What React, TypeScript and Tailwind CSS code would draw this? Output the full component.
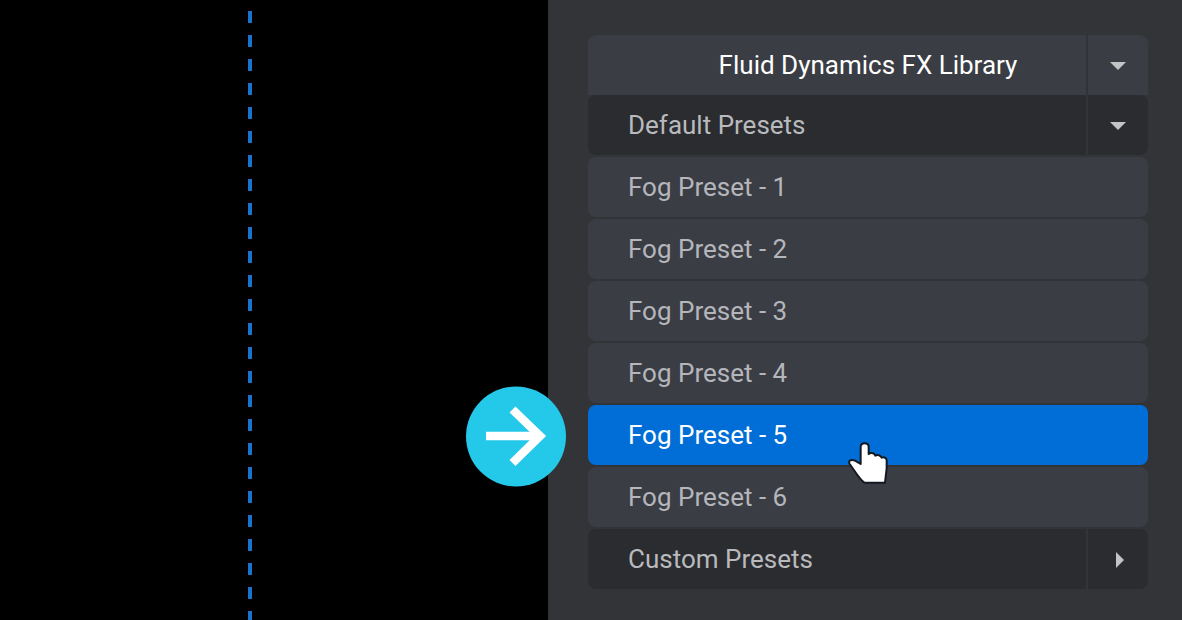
import React from 'react';

interface GroupRowProps {
    label: string;
    open: boolean;
    variant?: 'library' | 'group';
}

interface PresetRowProps {
    label: string;
    selected?: boolean;
    children?: React.ReactNode;
}

const presets = [1, 2, 3, 4, 5, 6];
const selectedPreset = 5;

const Caret: React.FC<{ open: boolean }> = ({ open }) => (
    open ? (
        <svg className="w-4 h-2" viewBox="0 0 16 8" fill="#c3c4c6" aria-hidden="true">
            <path d="M0 0H16L8 8Z" />
        </svg>
    ) : (
        <svg className="w-2 h-4 ml-1" viewBox="0 0 8 16" fill="#c3c4c6" aria-hidden="true">
            <path d="M0 0L8 8L0 16Z" />
        </svg>
    )
);

const GroupRow: React.FC<GroupRowProps> = ({ label, open, variant = 'group' }) => {
    const isLibrary = variant === 'library';
    const tone = isLibrary ? 'bg-[#3b3d44] text-white' : 'bg-[#2b2c2f] text-[#b9babd]';

    return (
        <div className={`flex gap-0.5 h-[60px] ${isLibrary ? 'rounded-t-lg bg-[#323337]' : 'rounded-lg bg-[#333438]'}`}>
            <button type="button" className={`flex-1 ${tone} ${isLibrary ? 'rounded-tl-lg pl-[62px] text-center' : 'rounded-l-lg pl-10 text-left'}`}>
                {label}
            </button>
            <button
                type="button"
                aria-label={`Toggle ${label}`}
                aria-expanded={open}
                className={`flex items-center justify-center w-[60px] pt-0.5 ${tone} ${isLibrary ? 'rounded-tr-lg' : 'rounded-r-lg'}`}
            >
                <Caret open={open} />
            </button>
        </div>
    );
};

const PresetRow: React.FC<PresetRowProps> = ({ label, selected = false, children }) => (
    <li className="relative">
        <button
            type="button"
            aria-pressed={selected}
            className={`block w-full h-[60px] pl-10 rounded-lg text-left ${selected ? 'bg-[#006ed6] text-white' : 'bg-[#3b3d44] text-[#b4b6bb]'}`}
        >
            {label}
        </button>
        {children}
    </li>
);

const ArrowBadge: React.FC = () => (
    <svg className="absolute z-10 -left-[122px] -top-[18px] size-[100px] overflow-visible" viewBox="0 0 100 100" fill="none" aria-hidden="true">
        <circle cx="50" cy="49.5" r="50" fill="#24c8e8" />
        <path d="M20 49H75M46.5 22.5L74 49L46.5 76" stroke="#fff" strokeWidth="8.5" />
    </svg>
);

const HandCursor: React.FC = () => (
    <svg className="absolute z-10 left-[259px] top-[35px] w-[42px] h-[45px]" viewBox="0 0 126 135" aria-hidden="true">
        <path
            d="M41 20C41 6 65 6 65 20V42C70 37 82 38 85 47C91 43 101 45 104 53C111 50 119 54 119 61V85L114 128H52C38 119 24 94 8 72C2 62 14 57 24 62L41 72Z"
            fill="#fff"
            stroke="#14181f"
            strokeWidth="6"
            strokeLinejoin="round"
        />
    </svg>
);

const App: React.FC = () => {
    return (
        <main className="grid grid-cols-[548fr_634fr] min-h-screen bg-black text-[26px] leading-8 font-['Roboto',sans-serif]">
            <section className="flex pl-[248px] pt-[11px]" aria-label="Canvas">
                <div className="w-1 bg-[repeating-linear-gradient(to_bottom,#1a73cb_0_12px,transparent_12px_24px)]" />
            </section>

            <aside className="bg-[#333438] pt-[35px] pb-[31px] pl-10 pr-[34px]">
                <GroupRow label="Fluid Dynamics FX Library" open variant="library" />
                <div className="flex flex-col gap-0.5">
                    <GroupRow label="Default Presets" open />
                    <ul className="flex flex-col gap-0.5">
                        {presets.map((n) => (
                            <PresetRow key={n} label={`Fog Preset - ${n}`} selected={n === selectedPreset}>
                                {n === selectedPreset && (
                                    <>
                                        <ArrowBadge />
                                        <HandCursor />
                                    </>
                                )}
                            </PresetRow>
                        ))}
                    </ul>
                    <GroupRow label="Custom Presets" open={false} />
                </div>
            </aside>
        </main>
    );
};

export default App;
